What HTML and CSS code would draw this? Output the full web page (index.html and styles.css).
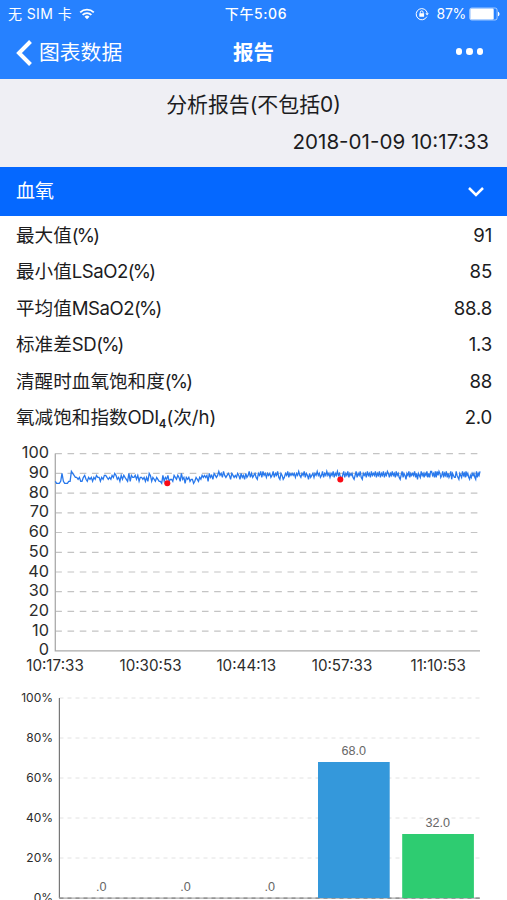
FILE: index.html
```
<!DOCTYPE html>
<html lang="zh-CN">
<head>
  <meta charset="UTF-8">
  <meta name="viewport" content="width=device-width, initial-scale=1.0">
  <title>报告</title>
  <link rel="stylesheet" href="styles.css">
</head>
<body>
  <header class="header">
    <div class="status-bar">
      <div class="status-left">
        <span>无 SIM 卡</span>
        <svg class="wifi" width="16" height="12" viewBox="0 0 16 12">
          <path d="M1.2 4.4a9.8 9.8 0 0 1 13.6 0M3.6 6.9a6.3 6.3 0 0 1 8.8 0" fill="none" stroke="#fff" stroke-width="1.8"/>
          <path d="M8 11.3 5.5 8.8a3.6 3.6 0 0 1 5 0z" fill="#fff"/>
        </svg>
      </div>
      <div class="status-time">下午5:06</div>
      <div class="status-right">
        <svg width="14" height="14" viewBox="0 0 14 14">
          <path d="M11.8 9.7A5.6 5.6 0 1 1 12.3 6.2" fill="none" stroke="#fff" stroke-width="1"/>
          <path d="M10.4 6.2h3.4l-1.7 2.3z" fill="#fff"/>
          <path d="M5.3 6.6V5.3a1.4 1.4 0 0 1 2.8 0v1.3" fill="none" stroke="#fff" stroke-width="1"/>
          <rect x="4.3" y="6.2" width="4.8" height="3.6" rx=".5" fill="#fff"/>
        </svg>
        <span class="percent">87%</span>
        <svg width="31" height="14" viewBox="0 0 31 14">
          <rect x=".7" y="1" width="27.4" height="12" rx="2" fill="none" stroke="#fff" stroke-opacity=".7" stroke-width=".8"/>
          <rect x="1.3" y="1.6" width="23.400" height="10.8" rx="1.2" fill="#fff"/>
          <path d="M29 4.7c2 .6 2 4 0 4.6z" fill="#fff"/>
        </svg>
      </div>
    </div>
    <nav class="nav-bar">
      <a class="back">
        <svg width="16" height="26" viewBox="0 0 16 26">
          <path d="M14.5 1.5 3 13l11.5 11.5" fill="none" stroke="#fff" stroke-width="4"/>
        </svg>
        <span>图表数据</span>
      </a>
      <h1>报告</h1>
      <div class="more"><i></i><i></i><i></i></div>
    </nav>
  </header>

  <section class="summary">
    <h2>分析报告(不包括0)</h2>
    <p>2018-01-09 10:17:33</p>
  </section>

  <div class="section-title">
    <span>血氧</span>
    <svg width="18" height="12" viewBox="0 0 18 12">
      <path d="m2 2 7 7 7-7" fill="none" stroke="#fff" stroke-width="2.5"/>
    </svg>
  </div>

  <ul class="values">
    <li><span>最大值<em>(%)</em></span><b>91</b></li>
    <li><span>最小值<i>LSaO2</i><em>(%)</em></span><b>85</b></li>
    <li><span>平均值<i>MSaO2</i><em>(%)</em></span><b>88.8</b></li>
    <li><span>标准差<i>SD</i><em>(%)</em></span><b>1.3</b></li>
    <li><span>清醒时血氧饱和度<em>(%)</em></span><b>88</b></li>
    <li><span>氧减饱和指数<i>ODI</i><small>4</small>(次/h)</span><b>2.0</b></li>
  </ul>

  <svg class="chart" id="lineChart" width="507" height="245" viewBox="0 435 507 245">
    <g class="grid" id="lineGrid"></g>
    <path class="axis" d="M55.3 453.5V650.9H480"/>
    <g class="y-labels" id="lineLabels"></g>
    <polyline class="spo2" id="spo2"/>
    <circle class="event" cx="167.3" cy="483.3" r="3"/>
    <circle class="event" cx="340.3" cy="479.4" r="3"/>
    <g class="x-labels">
      <text x="55" y="670.8">10:17:33</text>
      <text x="150.5" y="670.8">10:30:53</text>
      <text x="246.3" y="670.8">10:44:13</text>
      <text x="342" y="670.8">10:57:33</text>
      <text x="438.2" y="670.8">11:10:53</text>
    </g>
  </svg>

  <svg class="chart" width="507" height="220" viewBox="0 680 507 220">
    <path class="grid-light" d="M59.5 698H480M59.5 738H480M59.5 778H480M59.5 818H480M59.5 858H480"/>
    <path class="axis-dark" d="M59.4 698V898"/>
    <path class="axis" d="M59 898.2H480"/>
    <path class="axis-dashes" d="M59.5 898.2H480"/>
    <rect x="318" y="762" width="71.7" height="136" fill="#3498db"/>
    <rect x="402.2" y="834" width="71.7" height="64" fill="#2ecc71"/>
    <g class="percent-labels">
      <text x="53" y="701.5">100%</text>
      <text x="53" y="741.5">80%</text>
      <text x="53" y="781.5">60%</text>
      <text x="53" y="821.5">40%</text>
      <text x="53" y="861.5">20%</text>
      <text x="53" y="901.5">0%</text>
    </g>
    <g class="bar-labels">
      <text x="101.3" y="890.5">.0</text>
      <text x="185.5" y="890.5">.0</text>
      <text x="269.8" y="890.5">.0</text>
      <text x="353.7" y="754.7">68.0</text>
      <text x="437.7" y="826.7">32.0</text>
    </g>
  </svg>

  <script src="chart.js"></script>
</body>
</html>
```
FILE: styles.css
```
* {
  margin: 0;
  padding: 0;
  box-sizing: border-box;
}

body {
  width: 507px;
  height: 900px;
  overflow: hidden;
  background: #fff;
  color: #1c1c1e;
  font-family: Inter, "Noto Sans CJK SC", sans-serif;
}

svg {
  display: block;
}

.header {
  height: 79px;
  background: #2681ff;
  color: #fff;
}

.status-bar {
  display: grid;
  grid-template-columns: 1fr auto 1fr;
  align-items: center;
  height: 27px;
  padding: 0 7px 0 8px;
  font-size: 14px;
  line-height: 27px;
}

.status-left,
.status-right {
  display: flex;
  align-items: center;
}

.status-left {
  gap: 7px;
  letter-spacing: 0.4px;
}

.status-time {
  margin-left: 4px;
  font-weight: 500;
  letter-spacing: 0.6px;
}

.status-right {
  justify-content: flex-end;
}

.percent {
  margin: 0 3px 0 8px;
  letter-spacing: -0.3px;
}

.nav-bar {
  display: grid;
  grid-template-columns: 1fr auto 1fr;
  align-items: center;
  height: 52px;
  padding: 0 24px 0 16px;
  line-height: 52px;
}

.back {
  display: flex;
  align-items: center;
  gap: 7px;
  font-size: 20.8px;
}

.nav-bar h1 {
  font-size: 20.5px;
  font-weight: 600;
  margin-left: 8px;
}

.more {
  display: flex;
  justify-content: flex-end;
  gap: 4px;
  padding-bottom: 3px;
}

.more i {
  width: 6.5px;
  height: 6.5px;
  border-radius: 50%;
  background: #fff;
}

.summary {
  height: 87.5px;
  padding: 7px 18px 0;
  background: #efeff4;
}

.summary h2 {
  font-size: 20.9px;
  font-weight: 400;
  line-height: 38px;
  text-align: center;
}

.summary p {
  font-size: 20.6px;
  line-height: 35px;
  text-align: right;
}

.section-title {
  display: flex;
  justify-content: space-between;
  align-items: center;
  height: 49px;
  padding: 1px 22px 0 16px;
  background: #0568ff;
  color: #fff;
  font-size: 19px;
  line-height: 48px;
}

.values {
  list-style: none;
  padding: 0 15px 0 16px;
  height: 219.5px;
}

.values li {
  display: flex;
  justify-content: space-between;
  height: 36.6px;
  font-size: 18.6px;
  line-height: 38px;
}

.values b {
  font-weight: 400;
  letter-spacing: -0.2px;
}

.values i {
  font-style: normal;
  letter-spacing: -0.5px;
}

.values em {
  font-style: normal;
  letter-spacing: -1.8px;
}

.values small {
  position: relative;
  top: 4px;
  font-size: 11.5px;
  font-weight: 600;
  line-height: 1;
}

.chart text {
  fill: #2c2c2c;
}

.grid {
  stroke: #c4c4c4;
  stroke-width: 1.2;
  stroke-dasharray: 6.6 5.62;
}

.axis {
  fill: none;
  stroke: #aaa;
  stroke-width: 1.3;
}

.y-labels {
  font-size: 16.3px;
  text-anchor: end;
}

.x-labels {
  font-size: 15.2px;
  text-anchor: middle;
}

.spo2 {
  fill: none;
  stroke: #2878ec;
  stroke-width: 1.3;
}

.event {
  fill: #fa0a14;
}

.grid-light {
  stroke: #e2e2e2;
  stroke-width: 1;
  stroke-dasharray: 4 4;
}

.axis-dark {
  stroke: #777;
  stroke-width: 1.2;
}

.axis-dashes {
  stroke: #888;
  stroke-width: 1.2;
  stroke-dasharray: 4 4;
}

.percent-labels {
  font-size: 12px;
  text-anchor: end;
}

.bar-labels {
  font-family: "Liberation Sans", sans-serif;
  font-size: 12.6px;
  text-anchor: middle;
}

.chart .bar-labels text {
  fill: #666;
}
```
FILE: chart.js
```
// last digit of each SpO2 sample: 0 and 1 are 90 and 91, the rest are 84-89
const samples =
  '6555606555661098878668976878687988687998787980978697987606988979688' +
  '7868609687687665968796776987986078587867756876879898960897098919081' +
  '9890970989809708970891808908709181908090891809187097809180909080919' +
  '8091809708908091908918091908091809190879180918090879180918709081908' +
  '1909180918091809108091908190879180970918090918070981908091808119081' +
  '81910891809180891709881987098190819087980908718091';

const left = 55.3;
const right = 480;
const zero = 650.8;
const unit = 1.971;

const points = samples.split('').map((d, i) => {
  const value = d < 3 ? 90 + Number(d) : 80 + Number(d);
  const t = i / (samples.length - 1);
  const x = left + (right - left) * (t + 0.22 * t * (1 - t));
  return x.toFixed(1) + ',' + (zero - value * unit).toFixed(1);
});
document.getElementById('spo2').setAttribute('points', points.join(' '));

let grid = '';
let labels = '';
for (let v = 0; v <= 100; v += 10) {
  const y = (zero - v * unit).toFixed(1);
  if (v > 0) {
    grid += `<path d="M${left} ${y}H${right}"/>`;
  }
  labels += `<text x="49" y="${(Number(y) + 4.6).toFixed(1)}">${v}</text>`;
}
document.getElementById('lineGrid').innerHTML = grid;
document.getElementById('lineLabels').innerHTML = labels;
```
